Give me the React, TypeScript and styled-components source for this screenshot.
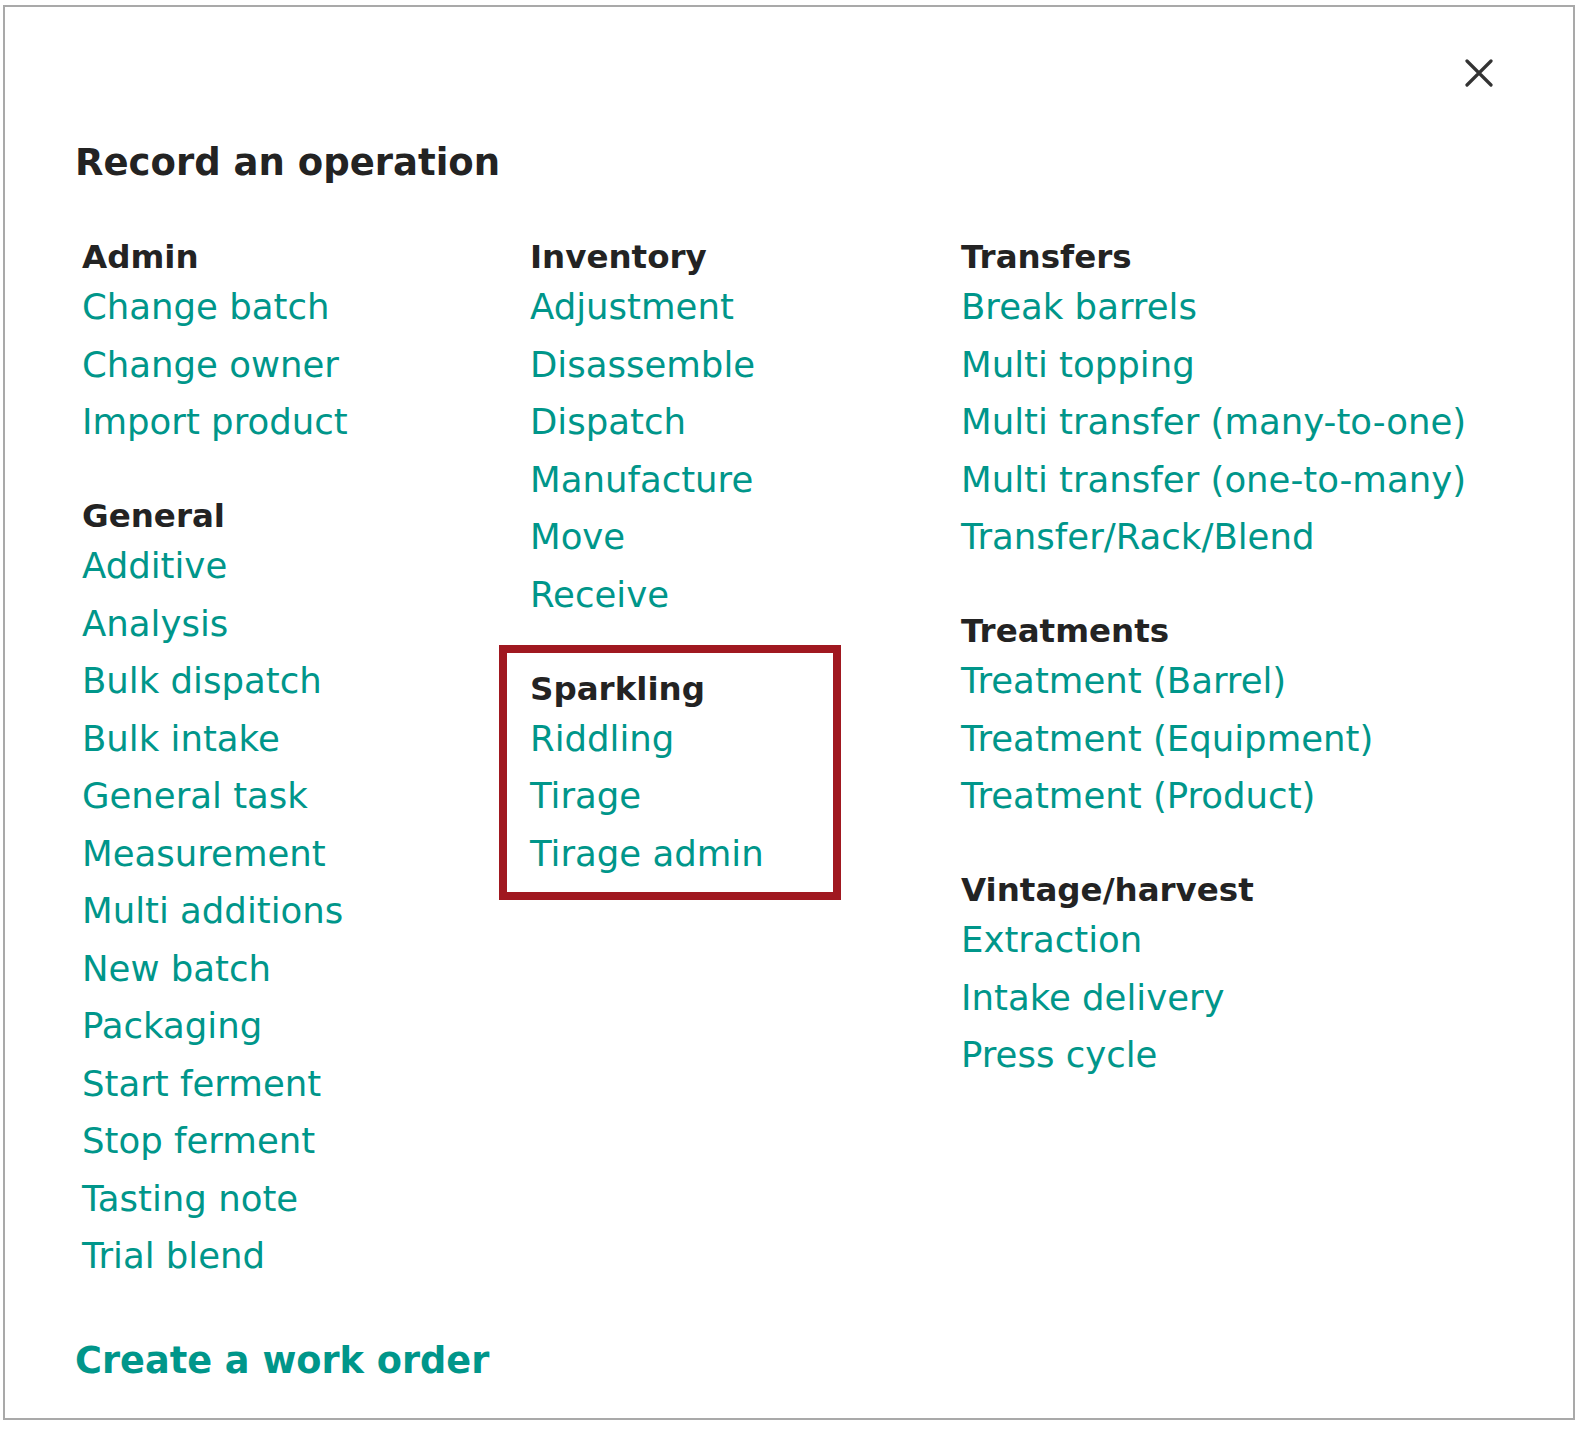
import styled, { createGlobalStyle } from "styled-components"

interface ISection {
  title: string
  items: string[]
  highlighted?: boolean
}

const columns: ISection[][] = [
  [
    { title: "Admin", items: ["Change batch", "Change owner", "Import product"] },
    {
      title: "General",
      items: [
        "Additive",
        "Analysis",
        "Bulk dispatch",
        "Bulk intake",
        "General task",
        "Measurement",
        "Multi additions",
        "New batch",
        "Packaging",
        "Start ferment",
        "Stop ferment",
        "Tasting note",
        "Trial blend",
      ],
    },
  ],
  [
    {
      title: "Inventory",
      items: ["Adjustment", "Disassemble", "Dispatch", "Manufacture", "Move", "Receive"],
    },
    { title: "Sparkling", items: ["Riddling", "Tirage", "Tirage admin"], highlighted: true },
  ],
  [
    {
      title: "Transfers",
      items: [
        "Break barrels",
        "Multi topping",
        "Multi transfer (many-to-one)",
        "Multi transfer (one-to-many)",
        "Transfer/Rack/Blend",
      ],
    },
    {
      title: "Treatments",
      items: ["Treatment (Barrel)", "Treatment (Equipment)", "Treatment (Product)"],
    },
    { title: "Vintage/harvest", items: ["Extraction", "Intake delivery", "Press cycle"] },
  ],
]

export default function App() {
  return (
    <>
      <GlobalStyle />
      <Frame>
        <TopBar>
          <CloseButton type="button" aria-label="Close">
            <svg width="28" height="28" viewBox="0 0 28 28">
              <path
                d="M2 2 L26 26 M26 2 L2 26"
                stroke="#333"
                strokeWidth="3.2"
                strokeLinecap="round"
              />
            </svg>
          </CloseButton>
        </TopBar>
        <Title>Record an operation</Title>
        <Grid>
          {columns.map((sections, i) => (
            <Column key={i}>
              {sections.map((section) => (
                <Section key={section.title} $highlighted={section.highlighted}>
                  <SectionTitle>{section.title}</SectionTitle>
                  {section.items.map((item) => (
                    <OperationLink key={item} href="#">
                      {item}
                    </OperationLink>
                  ))}
                </Section>
              ))}
            </Column>
          ))}
        </Grid>
        <WorkOrderLink href="#">Create a work order</WorkOrderLink>
      </Frame>
    </>
  )
}

const GlobalStyle = createGlobalStyle`
  body {
    margin: 0;
    background: #fff;
    font-family: "DejaVu Sans", sans-serif;
  }
`

const Frame = styled.div`
  box-sizing: border-box;
  width: 1572px;
  margin: 5px 0 0 3px;
  padding: 45px 73px 33px 70px;
  border: 2px solid #a9a9a9;
  background: #fff;
`

const TopBar = styled.div`
  display: flex;
  justify-content: flex-end;
  height: 42px;
`

const CloseButton = styled.button`
  display: flex;
  align-items: center;
  justify-content: center;
  width: 42px;
  height: 42px;
  padding: 0;
  border: none;
  background: transparent;
  cursor: pointer;
`

const Title = styled.h2`
  margin: 45px 0 0;
  font-size: 37px;
  line-height: 48px;
  font-weight: bold;
  color: #232323;
`

const Grid = styled.div`
  display: grid;
  grid-template-columns: 448px 431px 1fr;
  margin: 49px 0 0 7px;
`

const Column = styled.div`
  display: flex;
  flex-direction: column;
  align-items: flex-start;
  gap: 44.5px;
`

// the highlighted section gets a red frame drawn around it; the negative
// margins cancel border + padding so the text stays on the same grid
const Section = styled.div<{ $highlighted?: boolean }>`
  display: flex;
  flex-direction: column;
  align-items: flex-start;
  box-sizing: border-box;
  width: ${({ $highlighted }) => ($highlighted ? "342px" : "auto")};
  margin: ${({ $highlighted }) => ($highlighted ? "-23px 0 -18px -31px" : "0")};
  padding: ${({ $highlighted }) => ($highlighted ? "15px 0 10px 23px" : "0")};
  border: ${({ $highlighted }) => ($highlighted ? "8px solid #a01820" : "none")};
`

const SectionTitle = styled.h3`
  margin: 0;
  font-size: 32.5px;
  line-height: 42px;
  font-weight: bold;
  color: #232323;
`

const OperationLink = styled.a`
  display: block;
  font-size: 35.5px;
  line-height: 57.5px;
  color: #00968a;
  text-decoration: none;
`

const WorkOrderLink = styled.a`
  display: inline-block;
  margin-top: 52.7px;
  font-size: 36.7px;
  line-height: 48px;
  font-weight: bold;
  color: #00968a;
  text-decoration: none;
`
